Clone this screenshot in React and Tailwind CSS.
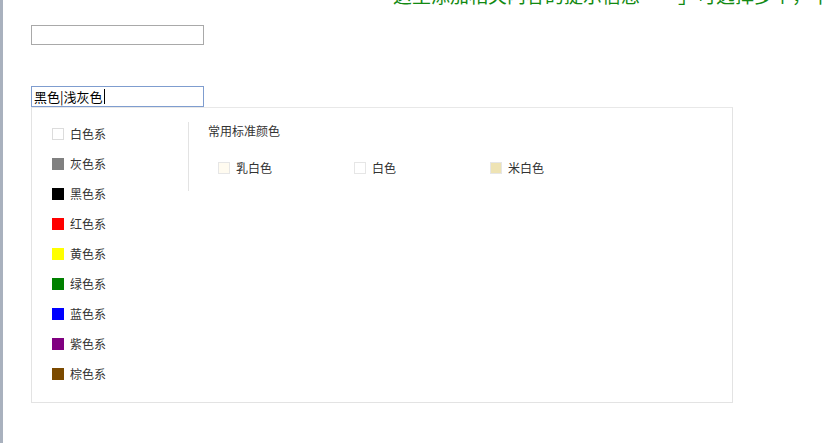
import React from "react";

const families = [
  { name: "白色系", color: "#ffffff", border: true },
  { name: "灰色系", color: "#808080" },
  { name: "黑色系", color: "#000000" },
  { name: "红色系", color: "#ff0000" },
  { name: "黄色系", color: "#ffff00" },
  { name: "绿色系", color: "#008000" },
  { name: "蓝色系", color: "#0000ff" },
  { name: "紫色系", color: "#800080" },
  { name: "棕色系", color: "#7b4a00" },
];

const standard = [
  { name: "乳白色", color: "#fffbf0" },
  { name: "白色", color: "#ffffff" },
  { name: "米白色", color: "#eee3b4" },
];

export default function App() {
  return (
    <div
      className="flex w-[831px] h-[443px] bg-white overflow-hidden"
      style={{ fontFamily: '"Noto Sans CJK SC", "Noto Sans", sans-serif' }}
    >
      <div className="w-[3px] h-full bg-[#a9b1be] shrink-0" />
      <div className="flex flex-col pl-[28px] flex-1">
        <div className="h-[7px] overflow-hidden pl-[362px]">
          <div className="-mt-[17px] text-[19px] leading-[24px] text-[#128a12] whitespace-nowrap">
            这里添加相关内容的提示信息「一」可选择多个，中间用竖线分隔
          </div>
        </div>
        <div className="mt-[18px] w-[173px] h-[20px] border border-[#a9a9a9] bg-white" />
        <div className="mt-[41px] w-[173px] h-[21px] border border-[#7f9dcf] bg-white flex items-center pl-[2px] text-[13px] leading-none text-black">
          <span>黑色|浅灰色</span>
          <span className="w-px h-[15px] bg-black ml-px" />
        </div>
        <div className="w-[702px] h-[296px] border border-[#e3e3e3] border-t-[#e8e8e8] flex text-[12px] text-[#333]">
          <div className="w-[156px] pl-[20px] pt-[11px] flex flex-col">
            {families.map((f) => (
              <div key={f.name} className="h-[30px] flex items-center">
                <span
                  className={`w-[12px] h-[12px] shrink-0 ${f.border ? "border border-[#dcdcdc]" : ""}`}
                  style={{ backgroundColor: f.color }}
                />
                <span className="ml-[6px] leading-none">{f.name}</span>
              </div>
            ))}
          </div>
          <div className="mt-[14px] h-[69px] border-l border-[#e3e3e3] pl-[19px] pt-[1px]">
            <div className="h-[16px] leading-[16px]">常用标准颜色</div>
            <div className="mt-[19px] flex pl-[10px]">
              {standard.map((s) => (
                <div key={s.name} className="w-[136px] h-[20px] flex items-center">
                  <span
                    className="w-[12px] h-[12px] shrink-0 border border-[#e6e6e6]"
                    style={{ backgroundColor: s.color }}
                  />
                  <span className="ml-[6px] leading-none">{s.name}</span>
                </div>
              ))}
            </div>
          </div>
        </div>
      </div>
    </div>
  );
}
